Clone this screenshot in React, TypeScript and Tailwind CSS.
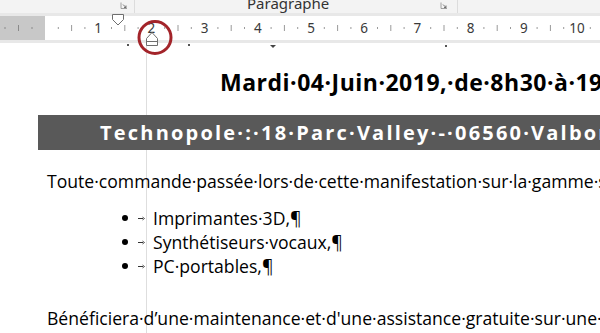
const CM = 53.2;
const dot = "\u00B7";

function Launcher() {
  return (
    <svg width="8" height="8" viewBox="0 0 8 8" className="shrink-0">
      <path d="M1 0.5 V6.5 H7" fill="none" stroke="#8a8a8a" strokeWidth="0.8" />
      <path d="M3 2.5 L6 5.5 M6 3.5 V5.5 H4" fill="none" stroke="#555" strokeWidth="0.8" />
    </svg>
  );
}

function Ruler() {
  const marks: JSX.Element[] = [];
  for (let c = 0; c < 11; c++) {
    const base = c * CM;
    if (c > 0) {
      marks.push(
        <text key={"n" + c} x={base} y={17} textAnchor="middle" fontSize="13.5" fill="#3a3a3a" fontFamily="'Noto Sans', sans-serif">
          {c}
        </text>
      );
    }
    marks.push(<rect key={"a" + c} x={base + CM * 0.25 - 0.5} y={11} width={1} height={2} fill="#9a9a9a" />);
    marks.push(<rect key={"b" + c} x={base + CM * 0.5 - 0.5} y={9} width={1} height={6} fill="#9a9a9a" />);
    marks.push(<rect key={"c" + c} x={base + CM * 0.75 - 0.5} y={11} width={1} height={2} fill="#9a9a9a" />);
  }
  return (
    <div className="flex h-[30px] bg-[#e8e8e8] py-[3px]">
      <div className="w-[45px] h-[24px] bg-[#c8c8c8]">
        <svg width="45" height="24">
          <rect x={4.5} y={11} width={1} height={2} fill="#8a8a8a" />
          <rect x={18} y={9} width={1} height={6} fill="#8a8a8a" />
          <rect x={31.5} y={11} width={1} height={2} fill="#8a8a8a" />
        </svg>
      </div>
      <div className="flex-1 h-[24px] bg-white">
        <svg width="555" height="24">{marks}</svg>
      </div>
    </div>
  );
}

function Overlay() {
  return (
    <svg width="600" height="70" className="absolute left-0 top-0 pointer-events-none">
      {/* first line indent */}
      <path d="M112.5 14.5 H123.5 V19.5 L118 25 L112.5 19.5 Z" fill="#fff" stroke="#6e6e6e" strokeWidth="1" />
      {/* hanging + left indent */}
      <path d="M146.5 38.5 L152 32.5 L157.5 38.5 V45.5 H146.5 Z" fill="#fff" stroke="#6e6e6e" strokeWidth="1" />
      <path d="M146.5 41.5 H157.5" stroke="#6e6e6e" strokeWidth="1" />
      {/* tab marks below ruler */}
      <rect x={127} y={44} width={2} height={2} fill="#555" />
      <rect x={188} y={44} width={2} height={2} fill="#555" />
      <path d="M270 45 H276 L273 48 Z" fill="#444" />
      <rect x={445} y={45} width={2} height={2} fill="#555" />
      {/* red highlight circle */}
      <circle cx={155} cy={37.5} r={16} fill="none" stroke="#a3242a" strokeWidth="3" />
    </svg>
  );
}

function Bullet({ text }: { text: string }) {
  return (
    <div className="flex items-center h-[24px]">
      <span className="w-[75px]" />
      <span className="w-[16px] flex">
        <span className="w-[6px] h-[6px] rounded-full bg-black" />
      </span>
      <span className="w-[15px] flex items-center">
        <svg width="7" height="5" viewBox="0 0 7 5">
          <path d="M0 2.5 H5" stroke="#333" strokeWidth="1" />
          <path d="M4.5 1 L6.5 2.5 L4.5 4" fill="none" stroke="#333" strokeWidth="0.8" />
        </svg>
      </span>
      <span>{text}¶</span>
    </div>
  );
}

export default function App() {
  return (
    <div className="relative w-[600px] h-[333px] overflow-hidden bg-white font-['Open_Sans',sans-serif] text-black">
      <div className="flex h-[13px] bg-[#f3f3f3] overflow-hidden">
        <div className="w-[135px] flex justify-end items-start pt-[2px] pr-[6px] border-r border-[#dcdcdc]">
          <Launcher />
        </div>
        <div className="w-[323px] flex items-end justify-between pr-[9px] border-r border-[#dcdcdc] overflow-hidden">
          <span className="pl-[112px] text-[15px] leading-[15px] mb-[2px] text-[#333] font-['Noto_Sans',sans-serif]">
            Paragraphe
          </span>
          <div className="self-start pt-[2px]">
            <Launcher />
          </div>
        </div>
        <div className="flex-1" />
      </div>
      <Ruler />
      <div className="relative">
        <div className="absolute left-[146px] top-0 w-px h-[290px] bg-[#dedede]" />
        <div className="relative whitespace-nowrap">
          <div className="pt-[25px] pl-[220px] text-[23px] leading-[28px] font-bold tracking-[0.5px]">
            {`Mardi${dot}04${dot}Juin${dot}2019,${dot}de${dot}8h30${dot}à${dot}19h00`}
          </div>
          <div className="mt-[19px] ml-[38px] h-[35px] bg-[#595959] flex items-center pl-[62px] text-white font-bold text-[20px] tracking-[2.2px]">
            {`Technopole${dot}:${dot}18${dot}Parc${dot}Valley${dot}-${dot}06560${dot}Valbonne`}
          </div>
          <div className="mt-[19px] pl-[47px] text-[17.6px] leading-[24px]">
            {`Toute${dot}commande${dot}passée${dot}lors${dot}de${dot}cette${dot}manifestation${dot}sur${dot}la${dot}gamme${dot}suivante`}
          </div>
          <div className="mt-[13px] pl-[47px] text-[17.6px]">
            <Bullet text={`Imprimantes${dot}3D,`} />
            <Bullet text={`Synthétiseurs${dot}vocaux,`} />
            <Bullet text={`PC${dot}portables,`} />
          </div>
          <div className="mt-[28px] pl-[47px] text-[17.6px] leading-[24px]">
            {`Bénéficiera${dot}d’une${dot}maintenance${dot}et${dot}d'une${dot}assistance${dot}gratuite${dot}sur${dot}une${dot}durée`}
          </div>
        </div>
      </div>
      <Overlay />
    </div>
  );
}
